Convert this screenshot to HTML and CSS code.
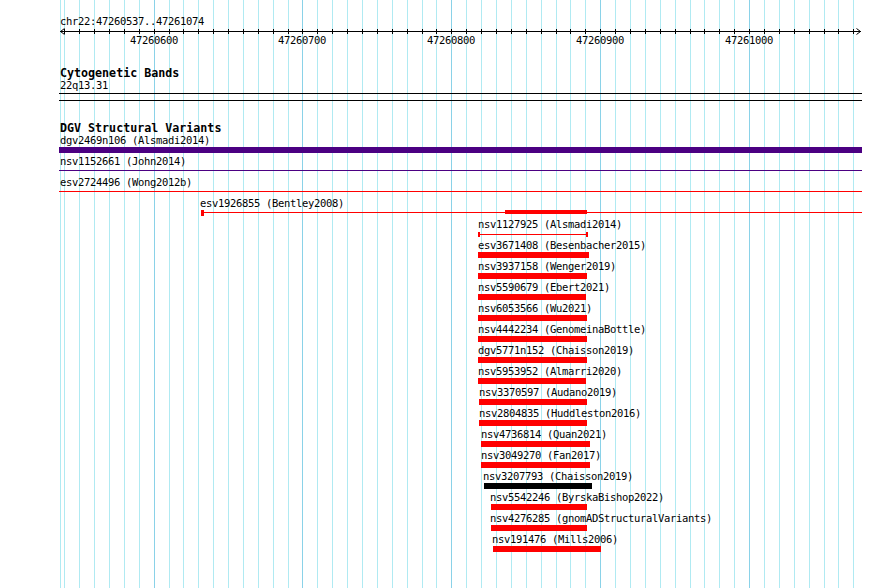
FILE: index.html
```html
<!DOCTYPE html>
<html>
<head>
<meta charset="utf-8">
<title>DGV Browser</title>
<link rel="stylesheet" href="styles.css">
</head>
<body>
<div class="browser">
  <svg class="grid" width="890" height="588" viewBox="0 0 890 588" shape-rendering="crispEdges">
    <path class="minor" d="M60.5 0V588M64.5 0V588M79.5 0V588M94.5 0V588M109.5 0V588M124.5 0V588M139.5 0V588M169.5 0V588M183.5 0V588M198.5 0V588M213.5 0V588M228.5 0V588M243.5 0V588M258.5 0V588M273.5 0V588M288.5 0V588M317.5 0V588M332.5 0V588M347.5 0V588M362.5 0V588M377.5 0V588M392.5 0V588M407.5 0V588M422.5 0V588M436.5 0V588M466.5 0V588M481.5 0V588M496.5 0V588M511.5 0V588M526.5 0V588M541.5 0V588M556.5 0V588M570.5 0V588M585.5 0V588M615.5 0V588M630.5 0V588M645.5 0V588M660.5 0V588M675.5 0V588M690.5 0V588M704.5 0V588M719.5 0V588M734.5 0V588M764.5 0V588M779.5 0V588M794.5 0V588M809.5 0V588M824.5 0V588M838.5 0V588M853.5 0V588"/>
    <path class="major" d="M154.5 0V588M302.5 0V588M451.5 0V588M600.5 0V588M749.5 0V588"/>
  </svg>

  <div class="content">
    <div class="poslabel">chr22:47260537..47261074</div>
    <svg class="ruler" width="890" height="9" viewBox="0 0 890 9" shape-rendering="crispEdges">
      <path class="axis" d="M60 4.5H861"/>
      <path class="ticks" d="M64.5 2V7M79.5 2V7M94.5 2V7M109.5 2V7M124.5 2V7M139.5 2V7M154.5 2V7M169.5 2V7M183.5 2V7M198.5 2V7M213.5 2V7M228.5 2V7M243.5 2V7M258.5 2V7M273.5 2V7M288.5 2V7M302.5 2V7M317.5 2V7M332.5 2V7M347.5 2V7M362.5 2V7M377.5 2V7M392.5 2V7M407.5 2V7M422.5 2V7M436.5 2V7M451.5 2V7M466.5 2V7M481.5 2V7M496.5 2V7M511.5 2V7M526.5 2V7M541.5 2V7M556.5 2V7M570.5 2V7M585.5 2V7M600.5 2V7M615.5 2V7M630.5 2V7M645.5 2V7M660.5 2V7M675.5 2V7M690.5 2V7M704.5 2V7M719.5 2V7M734.5 2V7M749.5 2V7M764.5 2V7M779.5 2V7M794.5 2V7M809.5 2V7M824.5 2V7M838.5 2V7M853.5 2V7"/>
      <path class="arrow" d="M64.5 1.5L60.5 4.5L64.5 7.5M856.5 1.5L860.5 4.5L856.5 7.5" shape-rendering="auto"/>
    </svg>
    <div class="ticklabels">
      <span class="ticklabel" style="margin-left:130px">47260600</span>
      <span class="ticklabel" style="margin-left:100px">47260700</span>
      <span class="ticklabel" style="margin-left:101px">47260800</span>
      <span class="ticklabel" style="margin-left:101px">47260900</span>
      <span class="ticklabel" style="margin-left:101px">47261000</span>
    </div>

    <section class="track cyto">
      <div class="tracktitle">Cytogenetic Bands</div>
      <div class="bandlabel">22q13.31</div>
      <div class="bandbox"></div>
    </section>

    <section class="track dgv">
      <div class="tracktitle">DGV Structural Variants</div>

      <div class="row">
        <div class="lbl" style="margin-left:60px">dgv2469n106 (Alsmadi2014)</div>
        <div class="glyph"><div class="bar indigo" style="margin-left:59px;width:803px"></div></div>
      </div>
      <div class="row">
        <div class="lbl" style="margin-left:60px">nsv1152661 (John2014)</div>
        <div class="glyph"><div class="line indigo" style="margin-left:59px;width:803px"></div></div>
      </div>
      <div class="row">
        <div class="lbl" style="margin-left:60px">esv2724496 (Wong2012b)</div>
        <div class="glyph"><div class="line" style="margin-left:59px;width:803px"></div></div>
      </div>
      <div class="row">
        <div class="lbl" style="margin-left:200px">esv1926855 (Bentley2008)</div>
        <div class="glyph">
          <div class="box" style="margin-left:201px"></div>
          <div class="line" style="width:301px"></div>
          <div class="thick" style="width:82px"></div>
          <div class="line" style="width:275px"></div>
        </div>
      </div>
      <div class="row">
        <div class="lbl" style="margin-left:478px">nsv1127925 (Alsmadi2014)</div>
        <div class="glyph">
          <div class="cap" style="margin-left:478px"></div>
          <div class="line capline" style="width:106px"></div>
          <div class="cap"></div>
        </div>
      </div>
      <div class="row">
        <div class="lbl" style="margin-left:478px">esv3671408 (Besenbacher2015)</div>
        <div class="glyph"><div class="bar" style="margin-left:478px;width:111px"></div></div>
      </div>
      <div class="row">
        <div class="lbl" style="margin-left:478px">nsv3937158 (Wenger2019)</div>
        <div class="glyph"><div class="bar" style="margin-left:478px;width:109px"></div></div>
      </div>
      <div class="row">
        <div class="lbl" style="margin-left:478px">nsv5590679 (Ebert2021)</div>
        <div class="glyph"><div class="bar" style="margin-left:478px;width:108px"></div></div>
      </div>
      <div class="row">
        <div class="lbl" style="margin-left:478px">nsv6053566 (Wu2021)</div>
        <div class="glyph"><div class="bar" style="margin-left:478px;width:109px"></div></div>
      </div>
      <div class="row">
        <div class="lbl" style="margin-left:478px">nsv4442234 (GenomeinaBottle)</div>
        <div class="glyph"><div class="bar" style="margin-left:478px;width:109px"></div></div>
      </div>
      <div class="row">
        <div class="lbl" style="margin-left:478px">dgv5771n152 (Chaisson2019)</div>
        <div class="glyph"><div class="bar" style="margin-left:478px;width:109px"></div></div>
      </div>
      <div class="row">
        <div class="lbl" style="margin-left:478px">nsv5953952 (Almarri2020)</div>
        <div class="glyph"><div class="bar" style="margin-left:478px;width:108px"></div></div>
      </div>
      <div class="row">
        <div class="lbl" style="margin-left:479px">nsv3370597 (Audano2019)</div>
        <div class="glyph"><div class="bar" style="margin-left:479px;width:108px"></div></div>
      </div>
      <div class="row">
        <div class="lbl" style="margin-left:479px">nsv2804835 (Huddleston2016)</div>
        <div class="glyph"><div class="bar" style="margin-left:479px;width:108px"></div></div>
      </div>
      <div class="row">
        <div class="lbl" style="margin-left:481px">nsv4736814 (Quan2021)</div>
        <div class="glyph"><div class="bar" style="margin-left:481px;width:109px"></div></div>
      </div>
      <div class="row">
        <div class="lbl" style="margin-left:481px">nsv3049270 (Fan2017)</div>
        <div class="glyph"><div class="bar" style="margin-left:481px;width:109px"></div></div>
      </div>
      <div class="row">
        <div class="lbl" style="margin-left:483px">nsv3207793 (Chaisson2019)</div>
        <div class="glyph"><div class="bar black" style="margin-left:484px;width:108px"></div></div>
      </div>
      <div class="row">
        <div class="lbl" style="margin-left:490px">nsv5542246 (ByrskaBishop2022)</div>
        <div class="glyph"><div class="bar" style="margin-left:491px;width:96px"></div></div>
      </div>
      <div class="row">
        <div class="lbl" style="margin-left:490px">nsv4276285 (gnomADStructuralVariants)</div>
        <div class="glyph"><div class="bar" style="margin-left:491px;width:96px"></div></div>
      </div>
      <div class="row">
        <div class="lbl" style="margin-left:492px">nsv191476 (Mills2006)</div>
        <div class="glyph"><div class="bar" style="margin-left:493px;width:108px"></div></div>
      </div>
    </section>
  </div>
</div>
</body>
</html>
```

FILE: styles.css
```css
html, body {
  margin: 0;
  padding: 0;
  background: #ffffff;
}

.browser {
  position: relative;
  width: 890px;
  height: 588px;
  overflow: hidden;
  background: #ffffff;
  color: #000000;
  font-family: "DejaVu Sans Mono", "Liberation Mono", monospace;
  font-size: 10.5px;
  letter-spacing: -0.32px;
  line-height: 10px;
}

.grid {
  position: absolute;
  left: 0;
  top: 0;
  display: block;
}

.grid .minor {
  stroke: #b0eaf2;
  stroke-width: 1;
  fill: none;
}

.grid .major {
  stroke: #8ad2e8;
  stroke-width: 1;
  fill: none;
}

.content {
  position: relative;
  padding-top: 17px;
}

.poslabel {
  margin-left: 60px;
  height: 10px;
  line-height: 9px;
  white-space: nowrap;
}

.ruler {
  display: block;
}

.ruler .axis,
.ruler .ticks,
.ruler .arrow {
  stroke: #000000;
  stroke-width: 1;
  fill: none;
}

.ticklabels {
  display: flex;
  height: 10px;
  line-height: 9px;
}

.ticklabel {
  flex: none;
  width: 48px;
  white-space: nowrap;
}

.tracktitle {
  margin-left: 60px;
  height: 12px;
  font-weight: bold;
  font-size: 11.67px;
  letter-spacing: 0;
  line-height: 12px;
  white-space: nowrap;
}

.cyto {
  margin-top: 21px;
}

.bandlabel {
  margin-top: 2px;
  margin-left: 60px;
  height: 10px;
  line-height: 9px;
}

.bandbox {
  margin-top: 2px;
  margin-left: 59px;
  width: 803px;
  height: 6px;
  border-top: 1px solid #000000;
  border-bottom: 1px solid #000000;
}

.dgv {
  margin-top: 21px;
}

.dgv .tracktitle {
  margin-bottom: 2px;
}

.row {
  height: 21px;
}

.lbl {
  height: 10px;
  line-height: 9px;
  white-space: nowrap;
}

.glyph {
  display: flex;
  align-items: flex-start;
  margin-top: 1px;
  height: 6px;
}

.bar {
  flex: none;
  height: 6px;
  background: #ff0000;
}

.bar.indigo {
  background: #4b0082;
}

.bar.black {
  background: #000000;
}

.line {
  flex: none;
  height: 1px;
  margin-top: 2px;
  background: #ff0000;
}

.line.indigo {
  background: #4b0082;
}

.line.capline {
  margin-top: 3px;
}

.box {
  flex: none;
  width: 3px;
  height: 6px;
  background: #ff0000;
}

.thick {
  flex: none;
  height: 4px;
  background: #ff0000;
}

.cap {
  flex: none;
  width: 2px;
  height: 5px;
  margin-top: 1px;
  background: #ff0000;
}
```
